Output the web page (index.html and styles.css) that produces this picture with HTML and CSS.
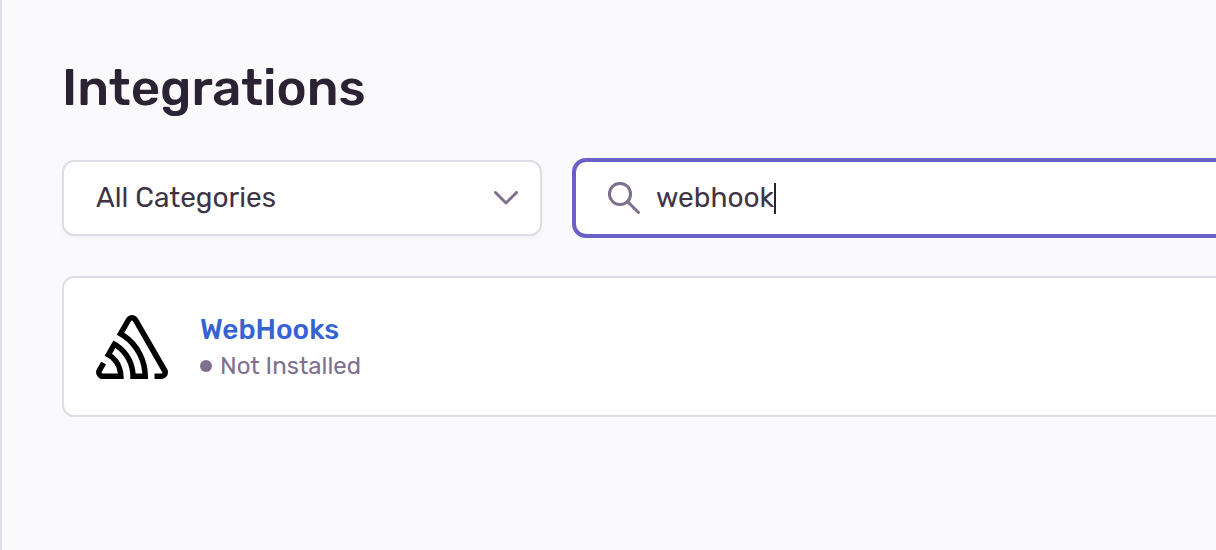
FILE: index.html
```html
<!DOCTYPE html>
<html lang="en">
<head>
<meta charset="utf-8">
<title>Integrations</title>
<link rel="stylesheet" href="styles.css">
</head>
<body>
<main class="page">
  <h1 class="title">Integrations</h1>
  <div class="filters">
    <div class="category">
      <select class="category-select" aria-label="Category">
        <option>All Categories</option>
      </select>
      <svg class="chevron" viewBox="0 0 24 14" aria-hidden="true"><path d="M1.5 1.5 12 12 22.5 1.5"/></svg>
    </div>
    <label class="search">
      <svg class="search-icon" viewBox="0 0 32 32" aria-hidden="true"><circle cx="12" cy="12" r="10.6"/><path d="M19.7 19.7 30.5 30.5"/></svg>
      <input class="search-input" type="text" value="webhook" aria-label="Search integrations">
      <span class="caret"></span>
    </label>
  </div>
  <section class="card">
    <svg class="logo" viewBox="0 0 50 44" preserveAspectRatio="none" aria-hidden="true"><path d="M29,2.26a4.67,4.67,0,0,0-8,0L14.42,13.53A32.21,32.21,0,0,1,32.17,40.19H27.55A27.68,27.68,0,0,0,12.09,17.47L6,28a15.92,15.92,0,0,1,9.23,12.17H4.62A.76.76,0,0,1,4,39.06l2.94-5a10.74,10.74,0,0,0-3.36-1.9l-2.91,5a4.54,4.54,0,0,0,1.69,6.24A4.66,4.66,0,0,0,4.62,44H19.15a19.4,19.4,0,0,0-8-17.31l2.31-4A23.87,23.87,0,0,1,23.76,44H36.07a35.88,35.88,0,0,0-16.41-31.8l4.67-8a.77.77,0,0,1,1.05-.27c.53.29,20.29,34.77,20.66,35.17a.76.76,0,0,1-.68,1.13H40.6q.09,1.91,0,3.81h4.78A4.59,4.59,0,0,0,50,39.43a4.49,4.49,0,0,0-.62-2.28Z"/></svg>
    <div class="details">
      <a class="name" href="#">WebHooks</a>
      <div class="status"><span class="dot"></span>Not Installed</div>
    </div>
  </section>
</main>
</body>
</html>
```
FILE: styles.css
```css
* {
  box-sizing: border-box;
}

body {
  margin: 0;
  background: #fafafc;
  color: #3e3446;
  font-family: Rubik, Roboto, sans-serif;
  font-size: 28px;
}

.page {
  min-height: 100vh;
  padding: 56px 0 60px 60px;
  border-left: 2px solid #e0dce5;
  overflow: hidden;
}

.title {
  margin: 0 0 40px;
  color: #2b2233;
  font-size: 51px;
  font-weight: 500;
  line-height: 64px;
}

.filters {
  display: flex;
  gap: 32px;
  margin-bottom: 40px;
}

.category {
  position: relative;
  flex: 0 0 480px;
}

.category-select {
  display: block;
  width: 100%;
  height: 76px;
  padding: 0 60px 2px 32px;
  appearance: none;
  border: 2px solid #e0dce5;
  border-radius: 12px;
  background: #fff;
  box-shadow: 0 2px 4px rgba(43, 34, 51, 0.04);
  color: inherit;
  font: inherit;
}

.chevron {
  position: absolute;
  top: 31px;
  right: 24px;
  width: 24px;
  height: 14px;
  fill: none;
  stroke: #80708f;
  stroke-width: 3;
  stroke-linecap: round;
  stroke-linejoin: round;
  pointer-events: none;
}

.search {
  display: flex;
  flex: 1;
  align-items: center;
  height: 76px;
  padding-left: 32px;
  border: 2px solid #6c5fc7;
  border-right: 0;
  border-radius: 12px 0 0 12px;
  background: #fff;
  box-shadow: 0 0 0 2px #6c5fc7;
}

.search-icon {
  flex: none;
  width: 32px;
  height: 32px;
  margin-right: 16px;
  fill: none;
  stroke: #80708f;
  stroke-width: 3;
  stroke-linecap: round;
}

.search-input {
  field-sizing: content;
  padding: 0 0 2px;
  border: 0;
  outline: 0;
  background: none;
  color: inherit;
  font: inherit;
}

.caret {
  width: 2px;
  height: 31px;
  background: #2b2233;
}

.card {
  display: flex;
  align-items: center;
  gap: 32px;
  padding: 32px 32px 31px;
  border: 2px solid #e0dce5;
  border-right: 0;
  border-radius: 12px 0 0 12px;
  background: #fff;
}

.logo {
  width: 72px;
  height: 64px;
}

.details {
  display: flex;
  flex-direction: column;
  align-items: flex-start;
  padding-bottom: 2px;
}

.name {
  color: #3562d4;
  font-weight: 500;
  line-height: 40px;
  text-decoration: none;
}

.status {
  display: flex;
  align-items: center;
  gap: 8px;
  color: #80708f;
  font-size: 24px;
  line-height: 32px;
}

.dot {
  width: 12px;
  height: 12px;
  border-radius: 50%;
  background: #80708f;
}
```
